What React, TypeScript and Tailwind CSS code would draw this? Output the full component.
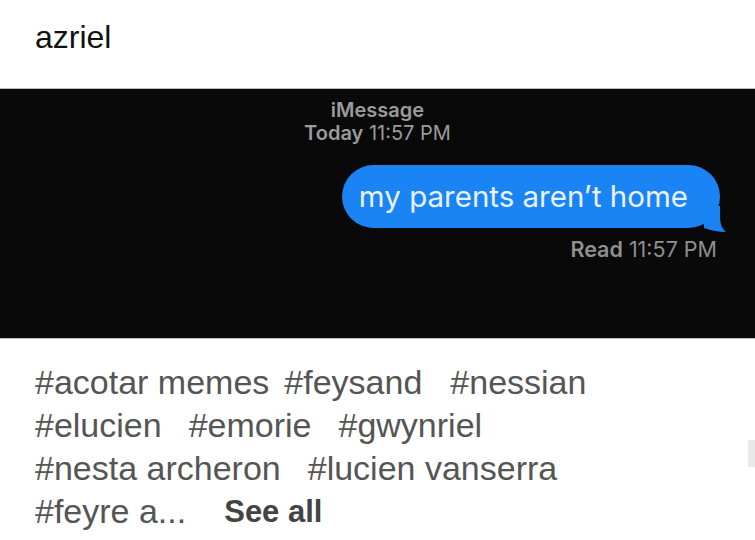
const tagRows: { text: string; gap: string }[][] = [
  [
    { text: '#acotar memes', gap: 'mr-[15px]' },
    { text: '#feysand', gap: 'mr-[28px]' },
    { text: '#nessian', gap: '' },
  ],
  [
    { text: '#elucien', gap: 'mr-[27px]' },
    { text: '#emorie', gap: 'mr-[27px]' },
    { text: '#gwynriel', gap: '' },
  ],
  [
    { text: '#nesta archeron', gap: 'mr-[27px]' },
    { text: '#lucien vanserra', gap: '' },
  ],
]

function Tail() {
  return (
    <svg width="26" height="26" viewBox="0 0 26 26" className="absolute right-[-6px] bottom-[-4px] z-0">
      <path d="M4 0 L20 0 L20 10 C20 18 22 23 26 26 C18 26 10 24 4 22 Z" fill="#1b84f4" />
    </svg>
  )
}

export default function App() {
  return (
    <div className="w-[755px] h-[540px] bg-white overflow-hidden relative font-['Liberation_Sans',Arial,sans-serif]">
      <div className="h-[88px] pl-[35px] pt-[17px] text-[32px] leading-[40px] text-[#111]">azriel</div>

      <div className="h-[251px] bg-[#090909] border-y border-[#bdbdbd] flex flex-col items-center font-['Inter',sans-serif]">
        <div className="mt-[9px] text-[20px] leading-[24px] font-semibold text-[#9b9b9b]">iMessage</div>
        <div className="text-[20px] leading-[22px] text-[#9b9b9b]">
          <span className="font-semibold">Today</span> 11:57 PM
        </div>
        <div className="self-end mr-[35px] mt-[21px] relative">
          <div className="bg-[#1b84f4] rounded-[32px] h-[63px] pl-[17px] pr-[32px] flex items-center text-[29.5px] text-[#e9f3ff] relative z-10">
            my parents aren’t home
          </div>
          <Tail />
        </div>
        <div className="self-end mr-[38px] mt-[9px] text-[21.5px] leading-[24px] text-[#8f8f8f]">
          <span className="font-semibold">Read</span> 11:57 PM
        </div>
      </div>

      <div className="pl-[35px] pt-[22px] text-[34px] leading-[43px] text-[#555]">
        {tagRows.map((row, i) => (
          <div key={i} className="flex">
            {row.map(t => (
              <span key={t.text} className={t.gap}>{t.text}</span>
            ))}
          </div>
        ))}
        <div className="flex">
          <span className="mr-[38px]">#feyre a...</span>
          <span className="font-bold text-[31px] text-[#444]">See all</span>
        </div>
      </div>

      <div className="absolute right-0 top-[440px] w-[7px] h-[27px] bg-[#e9e9e9]" />
    </div>
  )
}
